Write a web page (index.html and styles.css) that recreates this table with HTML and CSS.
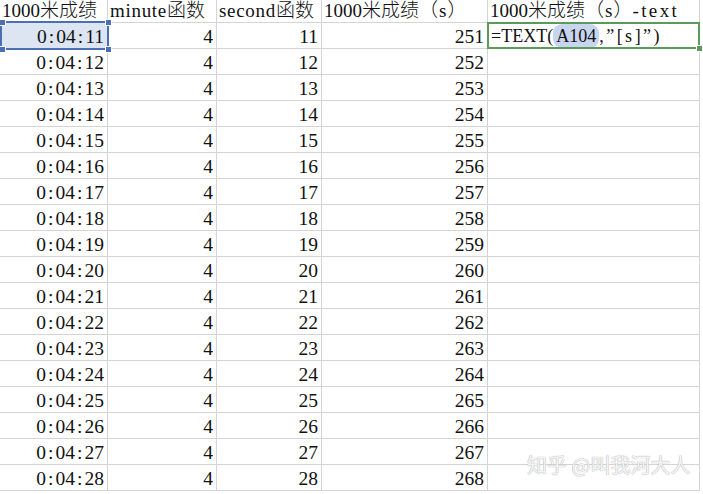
FILE: index.html
```html
<!DOCTYPE html>
<html lang="zh">
<head>
<meta charset="utf-8">
<title>Sheet</title>
<link rel="stylesheet" href="styles.css">
</head>
<body>
<div class="sheet">
  <div class="cell head"><span class="n">1000</span>米成绩</div>
  <div class="cell head"><span class="m">minute</span>函数</div>
  <div class="cell head"><span class="m">second</span>函数</div>
  <div class="cell head"><span class="n">1000</span>米成绩（<span class="s">s</span>）</div>
  <div class="cell head"><span class="n">1000</span>米成绩（<span class="s">s</span>）<span class="t">-text</span></div>

  <div class="cell num sel">0<i>:</i>04<i>:</i>11<b class="h tl"></b><b class="h tr"></b><b class="h bl"></b><b class="h br"></b></div><div class="cell num">4</div><div class="cell num">11</div><div class="cell num">251</div>
  <div class="cell edit"><span class="f1">=TEXT(</span><span class="ref">A104</span><span class="f2">,”[s]”)</span><b class="gh"></b></div>

  <div class="cell num">0<i>:</i>04<i>:</i>12</div><div class="cell num">4</div><div class="cell num">12</div><div class="cell num">252</div><div class="cell"></div>
  <div class="cell num">0<i>:</i>04<i>:</i>13</div><div class="cell num">4</div><div class="cell num">13</div><div class="cell num">253</div><div class="cell"></div>
  <div class="cell num">0<i>:</i>04<i>:</i>14</div><div class="cell num">4</div><div class="cell num">14</div><div class="cell num">254</div><div class="cell"></div>
  <div class="cell num">0<i>:</i>04<i>:</i>15</div><div class="cell num">4</div><div class="cell num">15</div><div class="cell num">255</div><div class="cell"></div>
  <div class="cell num">0<i>:</i>04<i>:</i>16</div><div class="cell num">4</div><div class="cell num">16</div><div class="cell num">256</div><div class="cell"></div>
  <div class="cell num">0<i>:</i>04<i>:</i>17</div><div class="cell num">4</div><div class="cell num">17</div><div class="cell num">257</div><div class="cell"></div>
  <div class="cell num">0<i>:</i>04<i>:</i>18</div><div class="cell num">4</div><div class="cell num">18</div><div class="cell num">258</div><div class="cell"></div>
  <div class="cell num">0<i>:</i>04<i>:</i>19</div><div class="cell num">4</div><div class="cell num">19</div><div class="cell num">259</div><div class="cell"></div>
  <div class="cell num">0<i>:</i>04<i>:</i>20</div><div class="cell num">4</div><div class="cell num">20</div><div class="cell num">260</div><div class="cell"></div>
  <div class="cell num">0<i>:</i>04<i>:</i>21</div><div class="cell num">4</div><div class="cell num">21</div><div class="cell num">261</div><div class="cell"></div>
  <div class="cell num">0<i>:</i>04<i>:</i>22</div><div class="cell num">4</div><div class="cell num">22</div><div class="cell num">262</div><div class="cell"></div>
  <div class="cell num">0<i>:</i>04<i>:</i>23</div><div class="cell num">4</div><div class="cell num">23</div><div class="cell num">263</div><div class="cell"></div>
  <div class="cell num">0<i>:</i>04<i>:</i>24</div><div class="cell num">4</div><div class="cell num">24</div><div class="cell num">264</div><div class="cell"></div>
  <div class="cell num">0<i>:</i>04<i>:</i>25</div><div class="cell num">4</div><div class="cell num">25</div><div class="cell num">265</div><div class="cell"></div>
  <div class="cell num">0<i>:</i>04<i>:</i>26</div><div class="cell num">4</div><div class="cell num">26</div><div class="cell num">266</div><div class="cell"></div>
  <div class="cell num">0<i>:</i>04<i>:</i>27</div><div class="cell num">4</div><div class="cell num">27</div><div class="cell num">267</div><div class="cell"></div>
  <div class="cell num">0<i>:</i>04<i>:</i>28</div><div class="cell num">4</div><div class="cell num">28</div><div class="cell num">268</div><div class="cell"></div>
</div>
<div class="watermark">知乎 @叫我河大人</div>
</body>
</html>
```

FILE: styles.css
```css
html, body {
  margin: 0;
  padding: 0;
  background: #ffffff;
}
body {
  width: 703px;
  height: 494px;
  overflow: hidden;
  position: relative;
  font-family: "Liberation Serif", "Noto Sans CJK SC", serif;
  font-size: 19.5px;
  color: #111;
}
.sheet {
  display: grid;
  grid-template-columns: 108px 109px 105px 166px 212px;
  grid-template-rows: 23px repeat(18, 26px);
}
.cell {
  box-sizing: border-box;
  border-right: 1px solid #d4d4d4;
  border-bottom: 1px solid #d4d4d4;
  height: 100%;
  line-height: 25px;
  padding: 0 3px 0 2px;
  white-space: nowrap;
  position: relative;
}
.head {
  line-height: 22px;
  padding-left: 2px;
  font-size: 19px;
  font-weight: 300;
}
.n {
  font-weight: 400;
}
.m {
  font-weight: 400;
  letter-spacing: 0.7px;
}
.s {
  font-weight: 400;
  padding: 0 1px;
}
.t {
  font-weight: 400;
  letter-spacing: 2.4px;
}
.num {
  text-align: right;
  padding-top: 1px;
}
.num i {
  font-style: normal;
  display: inline-block;
  width: 9.5px;
  text-align: center;
}
.sel {
  background: #dde5f3;
}
.sel::after {
  content: "";
  position: absolute;
  left: 0;
  top: -2px;
  right: -2px;
  bottom: -2px;
  border: 2px solid #4a70b3;
}
.h {
  position: absolute;
  width: 5px;
  height: 5px;
  background: #4a70b3;
  border: 1px solid #fff;
  z-index: 2;
}
.h.tl { left: -1px; top: -4px; }
.h.tr { right: -5px; top: -4px; }
.h.bl { left: -1px; bottom: -5px; }
.h.br { right: -5px; bottom: -5px; }
.edit {
  padding-left: 3px;
  line-height: 25px;
  font-size: 18px;
  padding-top: 1px;
}
.edit::after {
  content: "";
  position: absolute;
  left: -1px;
  top: -1px;
  right: -1px;
  bottom: -1px;
  border: 2px solid #5b9a5b;
}
.f2 {
  letter-spacing: 2.5px;
}
.ref {
  background: #c8d5ef;
  border-radius: 9px;
  padding: 2px 3px;
}
.gh {
  position: absolute;
  right: -4px;
  bottom: -4px;
  width: 5px;
  height: 5px;
  background: #5b9a5b;
  border: 1px solid #fff;
  z-index: 2;
}
.watermark {
  position: absolute;
  left: 527px;
  top: 451px;
  font-family: "Noto Sans CJK SC", sans-serif;
  font-size: 20px;
  line-height: 28px;
  color: rgba(255, 255, 255, 0.9);
  text-shadow: 0 0 1px #aaa, 0 0 1px #bbb;
}
```
